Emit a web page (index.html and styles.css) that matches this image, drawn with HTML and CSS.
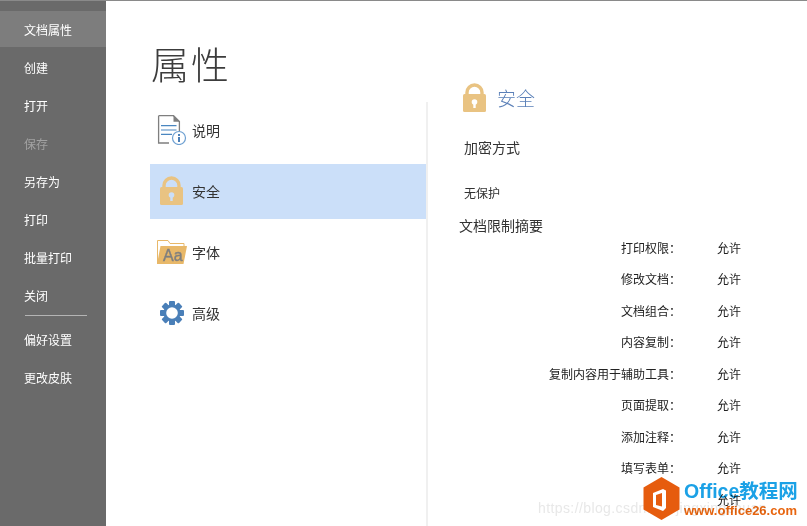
FILE: index.html
```html
<!DOCTYPE html>
<html lang="zh-CN">
<head>
<meta charset="utf-8">
<title>属性</title>
<link rel="stylesheet" href="styles.css">
</head>
<body>
<div class="app">
  <aside class="sidebar">
    <div class="side-item active">文档属性</div>
    <div class="side-item">创建</div>
    <div class="side-item">打开</div>
    <div class="side-item disabled">保存</div>
    <div class="side-item">另存为</div>
    <div class="side-item">打印</div>
    <div class="side-item">批量打印</div>
    <div class="side-item">关闭</div>
    <div class="side-rule"></div>
    <div class="side-item">偏好设置</div>
    <div class="side-item">更改皮肤</div>
  </aside>
  <section class="left">
    <h1 class="title">属性</h1>
    <nav class="tabs">
      <div class="tab">
        <svg class="tab-icon" width="30" height="30" viewBox="0 0 30 30">
          <path d="M1.6 .7H16.500L22.400 6.600V18M12 28H1.600V.7" fill="#fff" stroke="#7f7f7f" stroke-width="1.300"/>
          <path d="M16.500 .2L23 6.800H16.500Z" fill="#7f7f7f"/>
          <path d="M4 10.700H19.500M4 15H19.500M4 19.300H15" stroke="#4a86c0" stroke-width="1.200"/>
          <circle cx="22" cy="23" r="6.500" fill="#fff" stroke="#6ea0d2" stroke-width="1.200"/>
          <rect x="21" y="22" width="2" height="5" fill="#4a7fb8"/>
          <rect x="21" y="19" width="2" height="2" fill="#4a7fb8"/>
        </svg>
        <span>说明</span>
      </div>
      <div class="tab selected">
        <svg class="tab-icon" width="30" height="30" viewBox="0 0 30 30">
          <path d="M7 12V9.500a7.500 7.500 0 0 1 15 0V12" fill="none" stroke="#e9c382" stroke-width="3.400"/>
          <rect x="3" y="11" width="23" height="18" rx="1.500" fill="#e9c382"/>
          <circle cx="14.500" cy="19" r="2.800" fill="#cbdff9"/>
          <rect x="13.300" y="20" width="2.400" height="5" fill="#cbdff9"/>
        </svg>
        <span>安全</span>
      </div>
      <div class="tab">
        <svg class="tab-icon" width="30" height="30" viewBox="0 -1 30 30">
          <path d="M.5 26V2.500H11L13 5.500H27V8" fill="none" stroke="#e8b869" stroke-width="1"/>
          <path d="M3.500 8H30L26.500 26H0Z" fill="#e8b869"/>
          <text class="folder-text" x="6" y="23">Aa</text>
        </svg>
        <span>字体</span>
      </div>
      <div class="tab">
        <svg class="tab-icon" width="30" height="30" viewBox="1 0 30 30">
          <g fill="#4a7fb8">
            <rect x="13" y="3" width="6" height="24" rx="1"/>
            <rect x="13" y="3" width="6" height="24" rx="1" transform="rotate(45 16 15)"/>
            <rect x="13" y="3" width="6" height="24" rx="1" transform="rotate(90 16 15)"/>
            <rect x="13" y="3" width="6" height="24" rx="1" transform="rotate(135 16 15)"/>
          </g>
          <circle cx="16" cy="15" r="8.500" fill="#4a7fb8"/>
          <circle cx="16" cy="15" r="5.800" fill="#fff"/>
        </svg>
        <span>高级</span>
      </div>
    </nav>
  </section>
  <div class="rule"></div>
  <section class="panel">
    <header class="panel-head">
      <svg width="30" height="30" viewBox="0 0 30 30">
        <path d="M7 12V9.500a7.500 7.500 0 0 1 15 0V12" fill="none" stroke="#e9c382" stroke-width="3.400"/>
        <rect x="3" y="11" width="23" height="18" rx="1.500" fill="#e9c382"/>
        <circle cx="14.500" cy="19" r="2.800" fill="#fff"/>
        <rect x="13.300" y="20" width="2.400" height="5" fill="#fff"/>
      </svg>
      <h2>安全</h2>
    </header>
    <div class="enc-label">加密方式</div>
    <div class="enc-value">无保护</div>
    <div class="sum-title">文档限制摘要</div>
    <dl class="perm">
      <dt>打印权限：</dt><dd>允许</dd>
      <dt>修改文档：</dt><dd>允许</dd>
      <dt>文档组合：</dt><dd>允许</dd>
      <dt>内容复制：</dt><dd>允许</dd>
      <dt>复制内容用于辅助工具：</dt><dd>允许</dd>
      <dt>页面提取：</dt><dd>允许</dd>
      <dt>添加注释：</dt><dd>允许</dd>
      <dt>填写表单：</dt><dd>允许</dd>
      <dt>签名：</dt><dd>允许</dd>
    </dl>
  </section>
  <div class="csdn">https://blog.csdn.net/jingxingchuan</div>
  <div class="brand">
    <svg width="38" height="44" viewBox="0 0 38 44">
      <path d="M18.500 0L36.500 10.500V32.500L18.500 43L.5 32.500V10.500Z" fill="#e65c0e"/>
      <path fill-rule="evenodd" d="M10 16L20 12L23 13.500V31L20 34L10 30ZM13 18V28L19 29.500V16Z" fill="#fff"/>
    </svg>
    <div class="brand-text">
      <div class="brand-top">Office教程网</div>
      <div class="brand-url">www.office26.com</div>
    </div>
  </div>
</div>
</body>
</html>
```

FILE: styles.css
```css
* { box-sizing: border-box; margin: 0; padding: 0; }
html, body { width: 807px; height: 526px; overflow: hidden; background: #fff; }
body { font-family: "Noto Sans CJK SC", "Liberation Sans", sans-serif; color: #333; }

.app {
  position: relative;
  display: flex;
  width: 807px;
  height: 526px;
  overflow: hidden;
  border-top: 1px solid #8a8a8a;
}

.sidebar {
  flex: 0 0 106px;
  padding-top: 10px;
  background: #6a6a6a;
  color: #fff;
  font-size: 12px;
}
.side-item {
  display: flex;
  align-items: center;
  height: 36px;
  margin-bottom: 2px;
  padding-left: 24px;
}
.side-item.active { background: #7d7d7d; }
.side-item.disabled { color: #a2a2a2; }
.side-rule {
  width: 62px;
  height: 1px;
  margin: 2px 0 5px 25px;
  background: #b4b4b4;
}

.left { flex: 0 0 320px; padding: 38px 0 0 44px; }
.title {
  height: 48px;
  font-size: 38px;
  font-weight: 300;
  line-height: 48px;
  letter-spacing: 2px;
  color: #3c3c3c;
  margin-left: 1px;
}
.tabs { margin-top: 16px; }
.tab {
  display: flex;
  align-items: center;
  height: 55px;
  margin-bottom: 6px;
  padding-bottom: 1px;
  font-size: 14px;
}
.tab.selected { background: #cbdff9; }
.tab-icon { flex: none; margin: 0 5px 0 7px; }
.tab span { margin-bottom: 1px; color: #333; }
.folder-text { font: 400 16px "Liberation Sans", sans-serif; fill: #7f7f7f; stroke: #7f7f7f; stroke-width: .4px; }

.rule { flex: 0 0 2px; margin-top: 101px; background: #f0f0f0; }

.panel { flex: 1; padding: 82px 0 0 31px; }
.panel-head { display: flex; align-items: center; gap: 7px; height: 30px; margin-left: 1px; }
.panel-head h2 { font-size: 19px; font-weight: 300; color: #5b80b8; position: relative; top: -1px; }
.enc-label { margin: 24px 0 0 5px; height: 20px; font-size: 14px; line-height: 20px; }
.enc-value { margin: 27px 0 0 5px; height: 18px; font-size: 12px; line-height: 18px; }
.sum-title { margin-top: 13px; height: 20px; font-size: 14px; line-height: 20px; }

.perm {
  display: grid;
  grid-template-columns: 222px 60px;
  column-gap: 36px;
  grid-auto-rows: 31.5px;
  margin-top: 2.600px;
  font-size: 12px;
  line-height: 20px;
  color: #222;
}
.perm dt { text-align: right; }

.csdn {
  position: absolute;
  left: 538px;
  top: 499px;
  font: 14px "Liberation Sans", sans-serif;
  color: #e8e8e8;
  letter-spacing: .4px;
}
.brand {
  position: absolute;
  left: 643px;
  top: 476px;
  display: flex;
  gap: 3px;
  align-items: center;
}
.brand-text { display: flex; flex-direction: column; mix-blend-mode: multiply; }
.brand-top { font: 700 19.500px/24px "Liberation Sans", "Noto Sans CJK SC", sans-serif; color: #1ba1e6; }
.brand-url { font: 700 13px/16px "Liberation Sans", sans-serif; color: #e8650f; }
```
